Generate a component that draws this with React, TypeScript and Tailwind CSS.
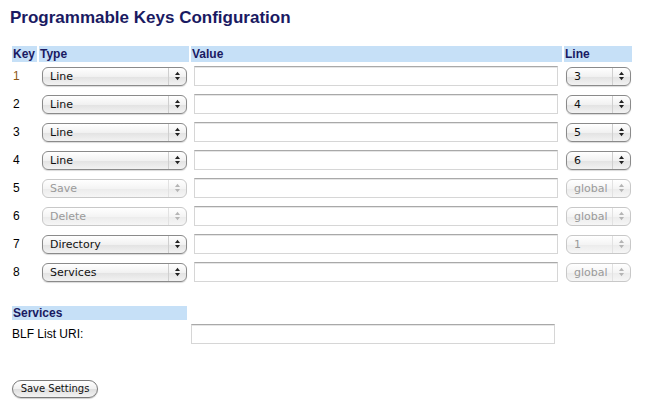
import React from "react";

type Row = { key: string; type: string; line: string; typeDisabled?: boolean; lineDisabled?: boolean; keyColor?: string };

const rows: Row[] = [
  { key: "1", type: "Line", line: "3", keyColor: "text-[#8c5614]" },
  { key: "2", type: "Line", line: "4" },
  { key: "3", type: "Line", line: "5" },
  { key: "4", type: "Line", line: "6" },
  { key: "5", type: "Save", line: "global", typeDisabled: true, lineDisabled: true },
  { key: "6", type: "Delete", line: "global", typeDisabled: true, lineDisabled: true },
  { key: "7", type: "Directory", line: "1", lineDisabled: true },
  { key: "8", type: "Services", line: "global", lineDisabled: true },
];

function Arrows({ disabled }: { disabled?: boolean }) {
  const c = disabled ? "#b5b5b5" : "#222";
  return (
    <svg width="7" height="10" viewBox="0 0 7 10" className="shrink-0">
      <path d="M3.5 0.8 L6 4 L1 4 Z" fill={c} />
      <path d="M3.5 9.2 L6 6 L1 6 Z" fill={c} />
    </svg>
  );
}

function Select({ value, disabled, w }: { value: string; disabled?: boolean; w: string }) {
  return (
    <div
      className={`${w} h-[19px] flex items-center rounded-[6px] border ${
        disabled
          ? "border-[#c8c8c8] text-[#9a9a9a] bg-[linear-gradient(#ffffff,#f4f4f4_50%,#ebebeb_51%,#f6f6f6)]"
          : "border-[#8a8a8a] text-[#111] bg-[linear-gradient(#ffffff,#f1f1f1_50%,#e2e2e2_51%,#f2f2f2)] shadow-[0_1px_1px_rgba(0,0,0,0.15)]"
      } text-[11px] font-['DejaVu_Sans',sans-serif] leading-none`}
    >
      <span className="flex-1 pl-[7px] truncate">{value}</span>
      <span className={`h-full border-l ${disabled ? "border-[#e2e2e2]" : "border-[#cfcfcf]"} w-[18px] flex items-center justify-center`}>
        <Arrows disabled={disabled} />
      </span>
    </div>
  );
}

function TextInput({ w }: { w: string }) {
  return (
    <div className={`${w} h-[20px] bg-white border border-[#d6d6d6] border-t-[#a9a9a9] shadow-[inset_0_1px_0_#e6e6e6]`} />
  );
}

export default function App() {
  return (
    <div className="w-[657px] h-[414px] bg-white font-['Liberation_Sans',Arial,sans-serif] text-[12px] text-black relative">
      <h1 className="pl-[10px] pt-[8px] text-[17px] font-bold text-[#1a1a62] leading-[20px]">
        Programmable Keys Configuration
      </h1>
      <div className="ml-[12px] mt-[18px] grid grid-cols-[25px_150px_371px_68px] gap-x-[2px]">
        {["Key", "Type", "Value", "Line"].map((h) => (
          <div key={h} className="h-[16px] bg-[#c6e0f7] text-[#1a1a62] font-bold text-[12px] leading-[16px] pl-[1px]">
            {h}
          </div>
        ))}
        {rows.map((r) => (
          <React.Fragment key={r.key}>
            <div className={`h-[28px] flex items-center pl-[1px] ${r.keyColor ?? "text-black"}`}>{r.key}</div>
            <div className="h-[28px] flex items-center pl-[3px]">
              <Select value={r.type} disabled={r.typeDisabled} w="w-[145px]" />
            </div>
            <div className="h-[28px] flex items-center pl-[3px]">
              <TextInput w="w-[364px]" />
            </div>
            <div className="h-[28px] flex items-center pl-[2px]">
              <Select value={r.line} disabled={r.lineDisabled} w="w-[65px]" />
            </div>
          </React.Fragment>
        ))}
      </div>
      <div className="ml-[12px] mt-[20px] w-[175px] h-[14px] bg-[#c6e0f7] text-[#1a1a62] font-bold text-[12px] leading-[14px] pl-[1px]">
        Services
      </div>
      <div className="ml-[12px] mt-[4px] flex items-center h-[19px]">
        <div className="w-[179px]">BLF List URI:</div>
        <TextInput w="w-[364px]" />
      </div>
      <div className="ml-[12px] mt-[37px]">
        <button className="h-[18px] w-[86px] rounded-full border border-[#7a7a7a] bg-[linear-gradient(#ffffff,#f0f0f0_50%,#dedede_51%,#f3f3f3)] shadow-[0_1px_1px_rgba(0,0,0,0.2)] text-[10px] font-['DejaVu_Sans',sans-serif] leading-none text-[#111] flex items-center justify-center">
          Save Settings
        </button>
      </div>
    </div>
  );
}
